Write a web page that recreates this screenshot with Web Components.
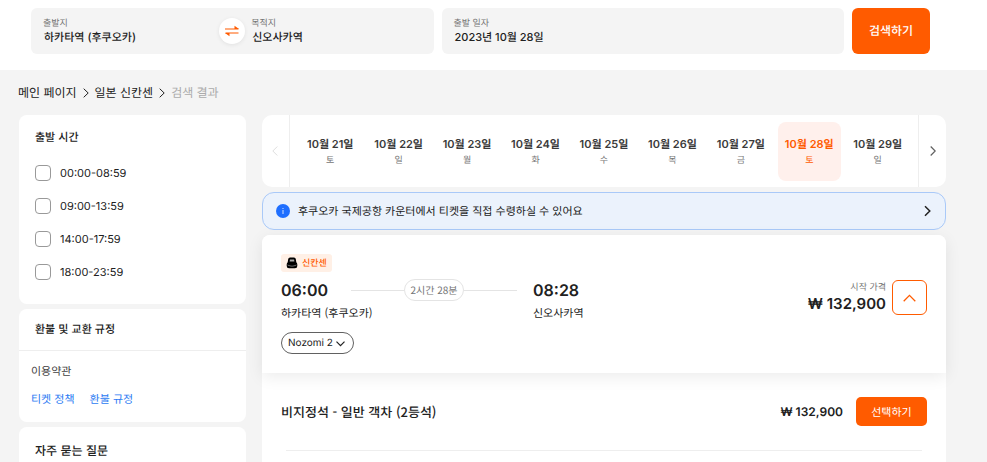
<!DOCTYPE html>
<html lang="ko">
<head>
<meta charset="utf-8">
<meta name="viewport" content="width=device-width, initial-scale=1">
<title>일본 신칸센</title>
<style>
  :root {
    --orange: #ff5b00;
    --ink: #212121;
    --grey: #757575;
    --line: #eeeeee;
    --page: #f4f4f4;
    --latin: Inter, "Noto Sans CJK KR", sans-serif;
    --hangul: "Noto Sans CJK KR", sans-serif;
  }

  body {
    margin: 0;
    background: var(--page);
    color: var(--ink);
    font: 11px/16px var(--hangul);
    text-rendering: geometricPrecision;
  }

  .layout {
    display: grid;
    grid-template-columns: 227px minmax(0, 1fr);
    gap: 16px;
    align-items: start;
    padding: 0 41px 0 19px;
  }

  .column {
    display: flex;
    flex-direction: column;
    gap: 5px;
  }
</style>
</head>
<body>
<search-bar>
  <search-field slot="from" label="출발지" value="하카타역 (후쿠오카)"></search-field>
  <search-field slot="to" label="목적지" value="신오사카역"></search-field>
  <search-field slot="date" label="출발 일자" value="2023년 10월 28일"></search-field>
</search-bar>

<bread-crumbs></bread-crumbs>

<div class="layout">
  <aside class="column">
    <side-card heading="출발 시간">
      <time-option label="00:00-08:59"></time-option>
      <time-option label="09:00-13:59"></time-option>
      <time-option label="14:00-17:59"></time-option>
      <time-option label="18:00-23:59"></time-option>
    </side-card>
    <policy-card></policy-card>
    <side-card heading="자주 묻는 질문" large></side-card>
  </aside>

  <main class="column">
    <date-strip>
      <date-day date="10월 21일" day="토"></date-day>
      <date-day date="10월 22일" day="일"></date-day>
      <date-day date="10월 23일" day="월"></date-day>
      <date-day date="10월 24일" day="화"></date-day>
      <date-day date="10월 25일" day="수"></date-day>
      <date-day date="10월 26일" day="목"></date-day>
      <date-day date="10월 27일" day="금"></date-day>
      <date-day date="10월 28일" day="토" selected></date-day>
      <date-day date="10월 29일" day="일"></date-day>
    </date-strip>
    <notice-bar>후쿠오카 국제공항 카운터에서 티켓을 직접 수령하실 수 있어요</notice-bar>
    <ticket-card>
      <seat-row label="비지정석 - 일반 객차 (2등석)" price="₩ 132,900"></seat-row>
    </ticket-card>
  </main>
</div>

<script>
const base = `
  * { box-sizing: border-box; }
  :host { display: block; }
  :host([hidden]) { display: none; }
  button, select, input { font: inherit; color: inherit; margin: 0; text-rendering: inherit; }
  button { border: 0; padding: 0; background: none; cursor: pointer; }
  svg { display: block; fill: none; stroke: currentColor; flex: none; }
  svg.solid { stroke: none; }
`;

class BaseElement extends HTMLElement {
    constructor () {
        super();
        const template = document.createElement('template');
        template.innerHTML = `<style>${base}</style>${this.render()}`;
        this.attachShadow({ mode: 'open' }).appendChild(template.content.cloneNode(true));
    }

    // copies host attributes into the elements marked with data-text
    connectedCallback () {
        this.shadowRoot.querySelectorAll('[data-text]').forEach((node) => {
            node.textContent = this.getAttribute(node.dataset.text) || '';
        });
    }
}

class SearchField extends BaseElement {
    render () {
        return `
      <style>
        :host { flex: 1; min-width: 0; }
        button {
          display: flex;
          flex-direction: column;
          width: 100%;
          text-align: left;
        }
        .label { font-size: 9px; line-height: 12px; color: var(--grey); }
        .value { font: 500 11px/16px var(--latin); padding-left: 1px; }
      </style>
      <button type="button">
        <span class="label" data-text="label"></span>
        <span class="value" data-text="value"></span>
      </button>`;
    }
}

class SearchBar extends BaseElement {
    render () {
        return `
      <style>
        :host { background: #fff; }
        form {
          display: flex;
          gap: 8px;
          padding: 8px 57px 16px 31px;
        }
        .box {
          display: flex;
          flex: 1;
          align-items: center;
          gap: 6px;
          min-width: 0;
          height: 46px;
          padding: 0 12px;
          border-radius: 6px;
          background: var(--page);
        }
        .swap {
          display: grid;
          flex: none;
          place-items: center;
          width: 26px;
          height: 26px;
          border-radius: 50%;
          background: #fff;
          color: var(--orange);
          box-shadow: 0 1px 4px rgba(0, 0, 0, 0.08);
        }
        .submit {
          width: 78px;
          border-radius: 6px;
          background: var(--orange);
          color: #fff;
          font-size: 12px;
          font-weight: 500;
        }
      </style>
      <form onsubmit="return false">
        <div class="box">
          <slot name="from"></slot>
          <button class="swap" type="button" aria-label="출발지와 목적지 바꾸기">
            <svg width="14" height="12" viewBox="0 0 14 12">
              <path d="M0 4H13.5M.5 8H13.5" stroke-width="1.2"/>
              <path d="M9.500 .8 14 4H9.500ZM4.500 11.200 0 8H4.500Z" fill="currentColor" stroke="none"/>
            </svg>
          </button>
          <slot name="to"></slot>
        </div>
        <div class="box"><slot name="date"></slot></div>
        <button class="submit" type="submit">검색하기</button>
      </form>`;
    }
}

class BreadCrumbs extends BaseElement {
    render () {
        return `
      <style>
        nav {
          display: flex;
          align-items: center;
          gap: 6px;
          height: 45px;
          padding: 0 18px;
          font-size: 12px;
        }
        a { color: inherit; text-decoration: none; }
        span { color: #ababab; }
      </style>
      <nav aria-label="경로">
        <a href="#">메인 페이지</a>
        <svg width="6" height="10" viewBox="0 0 6 10"><path d="M.7.7 5.200 5 .7 9.300"/></svg>
        <a href="#">일본 신칸센</a>
        <svg width="6" height="10" viewBox="0 0 6 10"><path d="M.7.7 5.200 5 .7 9.300"/></svg>
        <span aria-current="page">검색 결과</span>
      </nav>`;
    }
}

class SideCard extends BaseElement {
    render () {
        return `
      <style>
        :host {
          padding: 14px 16px 24px;
          border-radius: 8px;
          background: #fff;
        }
        h2 { margin: 0; font-size: 11px; line-height: 16px; font-weight: 500; }
        :host([large]) { padding-top: 16px; }
        :host([large]) h2 { font-size: 12px; }
        .body { display: grid; gap: 17px; padding-top: 20px; }
        :host([large]) .body { display: none; }
      </style>
      <h2 data-text="heading"></h2>
      <div class="body"><slot></slot></div>`;
    }
}

class TimeOption extends BaseElement {
    render () {
        return `
      <style>
        label {
          display: flex;
          align-items: center;
          gap: 9px;
          font: 11px/16px var(--latin);
          cursor: pointer;
        }
        input {
          appearance: none;
          width: 16px;
          height: 16px;
          border: 1px solid #999;
          border-radius: 4px;
          background: #fff;
        }
        input:checked { background: var(--orange); border-color: var(--orange); }
      </style>
      <label><input type="checkbox"><span data-text="label"></span></label>`;
    }
}

class PolicyCard extends BaseElement {
    render () {
        return `
      <style>
        :host { border-radius: 8px; background: #fff; }
        h2 {
          margin: 0;
          padding: 12px 16px 13px;
          border-bottom: 1px solid var(--line);
          font-size: 11px;
          line-height: 16px;
          font-weight: 500;
        }
        .body { padding: 12px 12px 15px; color: #424242; }
        p { margin: 0 0 12px; }
        .links { display: flex; gap: 15px; }
        a { color: #2b7bf3; text-decoration: none; }
      </style>
      <h2>환불 및 교환 규정</h2>
      <div class="body">
        <p>이용약관</p>
        <div class="links"><a href="#">티켓 정책</a><a href="#">환불 규정</a></div>
      </div>`;
    }
}

class DateDay extends BaseElement {
    render () {
        return `
      <style>
        :host { flex: 1; min-width: 0; }
        button {
          display: flex;
          flex-direction: column;
          align-items: center;
          justify-content: center;
          width: 100%;
          height: 59px;
          border-radius: 8px;
          white-space: nowrap;
        }
        .date { font: 600 11px/18px var(--latin); color: #3a3a3a; }
        .day { font-size: 9px; line-height: 14px; color: var(--grey); }
        :host([selected]) button { background: #fff0ec; }
        :host([selected]) span { color: var(--orange); }
      </style>
      <button type="button">
        <span class="date" data-text="date"></span>
        <span class="day" data-text="day"></span>
      </button>`;
    }
}

class DateStrip extends BaseElement {
    render () {
        return `
      <style>
        :host {
          display: flex;
          height: 72px;
          border-radius: 10px;
          background: #fff;
        }
        .days {
          display: flex;
          flex: 1;
          align-items: center;
          gap: 6px;
          min-width: 0;
          padding: 0 9px;
        }
        .nav { display: grid; place-items: center; width: 28px; color: #616161; }
        .prev { border-right: 1px solid var(--line); color: #dedede; }
        .next { border-left: 1px solid var(--line); }
      </style>
      <button class="nav prev" type="button" aria-label="이전 날짜">
        <svg width="8" height="10" viewBox="0 0 8 10"><path d="M5.300.5.8 5l4.500 4.500"/></svg>
      </button>
      <div class="days"><slot></slot></div>
      <button class="nav next" type="button" aria-label="다음 날짜">
        <svg width="6" height="10" viewBox="0 0 6 10"><path d="M.7.5 5.200 5 .7 9.500" stroke-width="1.200"/></svg>
      </button>`;
    }
}

class NoticeBar extends BaseElement {
    render () {
        return `
      <style>
        button {
          display: flex;
          align-items: center;
          gap: 8px;
          width: 100%;
          height: 38px;
          padding: 0 14px 0 13px;
          border: 1px solid #a9c9f8;
          border-radius: 12px;
          background: #ebf2fc;
          text-align: left;
        }
        span { flex: 1; }
      </style>
      <button type="button">
        <svg class="solid" width="14" height="14" viewBox="0 0 14 14">
          <circle cx="7" cy="7" r="7" fill="#1f6fff"/>
          <path d="M6.500 4H7.500V5H6.500ZM6.500 6H7.500V10H6.500Z" fill="#cfe0ff"/>
        </svg>
        <span><slot></slot></span>
        <svg width="7" height="12" viewBox="0 0 7 12"><path d="M1 1.200 5.800 6 1 10.800" stroke-width="1.500"/></svg>
      </button>`;
    }
}

class TicketCard extends BaseElement {
    render () {
        return `
      <style>
        :host { padding-bottom: 24px; background: #fff; border-radius: 8px; }
        .summary {
          display: flex;
          align-items: flex-start;
          justify-content: space-between;
          height: 138px;
          padding: 19px 19px 0;
          border-radius: 8px 8px 0 0;
          background: #fff;
          box-shadow: 0 4px 16px rgba(0, 0, 0, 0.08);
        }
        .badge {
          display: inline-flex;
          align-items: center;
          gap: 4px;
          height: 18px;
          padding: 0 5px;
          border-radius: 3px;
          background: #fff0e6;
          color: var(--orange);
          font-size: 9px;
          font-weight: 500;
        }
        .trip {
          display: grid;
          grid-template-columns: 70px 166px auto;
          align-items: center;
          padding-top: 5px;
        }
        .time { font: 600 16px/24px var(--latin); }
        .arrive { padding-left: 16px; }
        .station { grid-column: span 2; line-height: 22px; white-space: nowrap; }
        .duration {
          display: flex;
          align-items: center;
          color: var(--grey);
          font: 10px/14px var(--hangul);
          white-space: nowrap;
        }
        .duration::before, .duration::after {
          content: "";
          flex: 1;
          height: 1px;
          background: #e4e4e4;
        }
        .duration span {
          padding: 3px 5px;
          border: 1px solid #e4e4e4;
          border-radius: 11px;
        }
        .train {
          position: relative;
          display: inline-block;
          margin-top: 8px;
        }
        select {
          display: block;
          appearance: none;
          height: 22px;
          padding: 0 20px 0 6px;
          border: 1px solid #616161;
          border-radius: 11px;
          background: #fff;
          font: 10px/16px var(--latin);
        }
        .train svg { position: absolute; right: 9px; top: 9px; pointer-events: none; }
        .side { display: flex; align-items: center; gap: 6px; padding-top: 26px; }
        .price { text-align: right; }
        .price small { display: block; font-size: 9px; line-height: 12px; color: var(--grey); }
        .price strong { display: block; font: 600 15px/22px var(--latin); }
        .toggle {
          display: grid;
          place-items: center;
          width: 35px;
          height: 35px;
          border: 1px solid var(--orange);
          border-radius: 6px;
          color: var(--orange);
        }
      </style>
      <div class="summary">
        <div>
          <span class="badge">
            <svg class="solid" width="12" height="12" viewBox="0 0 12 12">
              <path d="M4 .5H8Q9.500.5 9.800 2L10.300 5.200Q11.300 6 11.300 7.500V9Q11.300 11.300 9 11.300H3Q.7 11.300.7 9V7.500Q.7 6 1.700 5.200L2.200 2Q2.500.5 4 .5Z" fill="#000"/>
              <path d="M4 2.500H8L8.400 4.600H3.600Z" fill="#aaa"/>
              <path d="M1.500 7.600Q6 10 10.500 7.600V8.200Q6 10.600 1.500 8.200Z" fill="#888"/>
            </svg>신칸센
          </span>
          <div class="trip">
            <div class="time">06:00</div>
            <div class="duration"><span>2시간 28분</span></div>
            <div class="time arrive">08:28</div>
            <div class="station">하카타역 (후쿠오카)</div>
            <div class="arrive">신오사카역</div>
          </div>
          <div class="train">
            <select aria-label="열차"><option>Nozomi 2</option></select>
            <svg width="9" height="6" viewBox="0 0 9 6"><path d="M.5.7 4.500 4.700 8.500.7" stroke-width="1.200"/></svg>
          </div>
        </div>
        <div class="side">
          <div class="price"><small>시작 가격</small><strong>₩ 132,900</strong></div>
          <button class="toggle" type="button" aria-label="좌석 접기" aria-expanded="true">
            <svg width="13" height="8" viewBox="0 0 13 8"><path d="M.7 7.200 6.500 1.400 12.300 7.200" stroke-width="1.300"/></svg>
          </button>
        </div>
      </div>
      <slot></slot>`;
    }
}

class SeatRow extends BaseElement {
    render () {
        return `
      <style>
        :host { padding: 0 19px; }
        .row { display: flex; align-items: center; height: 77px; }
        h3 { flex: 1; margin: 0; font: 500 13px/20px var(--hangul); }
        .price { font: 600 12px/20px var(--latin); }
        button {
          width: 71px;
          height: 29px;
          margin-left: 13px;
          border-radius: 5px;
          background: var(--orange);
          color: #fff;
        }
        hr { margin: 0 5px; border: 0; border-top: 1px solid var(--line); }
      </style>
      <div class="row">
        <h3 data-text="label"></h3>
        <span class="price" data-text="price"></span>
        <button type="button">선택하기</button>
      </div>
      <hr>`;
    }
}

customElements.define('search-field', SearchField);
customElements.define('search-bar', SearchBar);
customElements.define('bread-crumbs', BreadCrumbs);
customElements.define('side-card', SideCard);
customElements.define('time-option', TimeOption);
customElements.define('policy-card', PolicyCard);
customElements.define('date-day', DateDay);
customElements.define('date-strip', DateStrip);
customElements.define('notice-bar', NoticeBar);
customElements.define('ticket-card', TicketCard);
customElements.define('seat-row', SeatRow);
</script>
</body>
</html>
